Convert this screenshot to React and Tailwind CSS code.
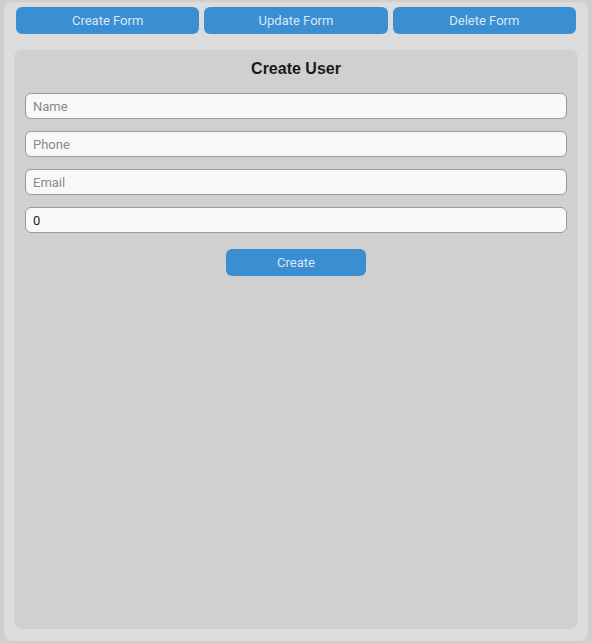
export default function App() {
  const fields = [
    { placeholder: "Name", value: "" },
    { placeholder: "Phone", value: "" },
    { placeholder: "Email", value: "" },
    { placeholder: "", value: "0" },
  ];

  return (
    <div className="h-[643px] bg-[#cfcfcf] px-[4px] pt-[2px] pb-[2px] font-['Roboto',sans-serif]">
      <div className="h-[639px] bg-[#dcdcdc] rounded-[8px] flex flex-col pt-[5px] pb-[12px]">
        {/* Tabs */}
        <div className="flex gap-[5px] px-[12px]">
          {["Create Form", "Update Form", "Delete Form"].map((t) => (
            <button
              key={t}
              className="flex-1 h-[27px] rounded-[6px] bg-[#3a8fd2] text-[#d9e8f6] text-[13px]"
            >
              {t}
            </button>
          ))}
        </div>

        {/* Form panel */}
        <div className="flex-1 mt-[16px] mx-[10px] bg-[#d0d0d0] rounded-[8px] px-[11px] pt-[9px]">
          <h2 className="text-center text-[16px] font-bold text-[#1a1a1a] font-['Liberation_Sans',Arial,sans-serif] h-[20px] leading-[20px]">
            Create User
          </h2>
          <div className="flex flex-col gap-[12px] mt-[14px]">
            {fields.map((f, i) => (
              <input
                key={i}
                defaultValue={f.value}
                placeholder={f.placeholder}
                className="h-[26px] w-full rounded-[6px] border border-[#9a9a9a] bg-[#f8f8f8] px-[7px] text-[13px] text-[#222] placeholder:text-[#8a8a8a] outline-none"
              />
            ))}
          </div>
          <div className="flex justify-center mt-[16px]">
            <button className="w-[140px] h-[27px] rounded-[6px] bg-[#3a8fd2] text-[#d9e8f6] text-[13px]">
              Create
            </button>
          </div>
        </div>
      </div>
    </div>
  );
}
